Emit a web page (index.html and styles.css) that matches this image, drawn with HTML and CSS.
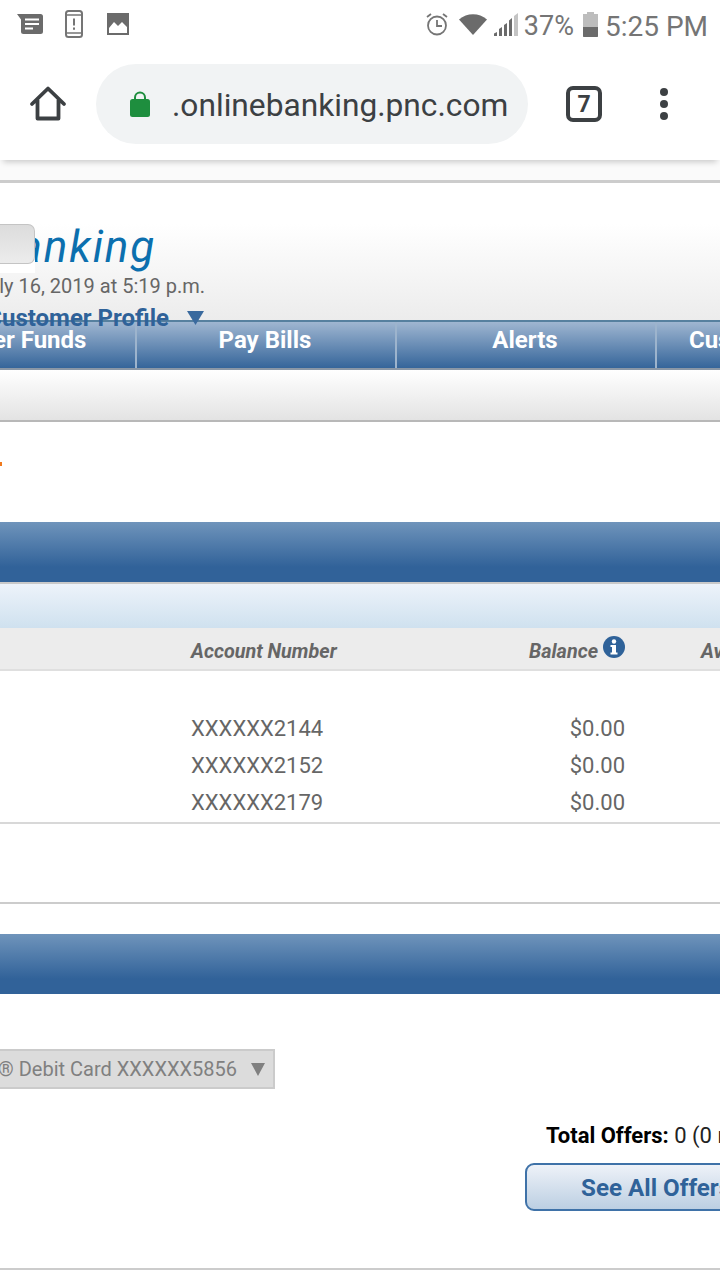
FILE: index.html
```html
<!DOCTYPE html>
<html lang="en">
<head>
<meta charset="utf-8">
<title>PNC Online Banking</title>
<link rel="stylesheet" href="styles.css">
</head>
<body>
<div class="screen">
  <div class="status">
    <div class="status-left">
      <svg class="ic-msg" width="26" height="20" viewBox="0 0 26 20"><path d="M0 0h23.500A2.500 2.500 0 0 1 26 2.500v15a2.500 2.500 0 0 1-2.500 2.500H6.500A2.500 2.500 0 0 1 4 17.500V5.500z" fill="#6b6b6b"/><path d="M8 5.500h14M8 10h14M8 14.500h8" stroke="#fff" stroke-width="2"/></svg>
      <svg class="ic-phone" width="18" height="28" viewBox="0 0 18 28"><rect x="1" y="1" width="16" height="26" rx="2.500" fill="none" stroke="#757575" stroke-width="2"/><path d="M1 5h16M1 23h16" stroke="#757575" stroke-width="1.500"/><path d="M9 8.500v7M9 17.500v2.200" stroke="#757575" stroke-width="2"/></svg>
      <svg class="ic-pic" width="22" height="22" viewBox="0 0 22 22"><rect width="22" height="22" fill="#6b6b6b"/><path d="M2 20v-5l5-6 4 4 4-4 5 5v6z" fill="#fff"/></svg>
    </div>
    <div class="status-right">
      <svg class="ic-alarm" width="24" height="24" viewBox="0 0 24 24"><circle cx="12" cy="13.500" r="9" fill="none" stroke="#757575" stroke-width="1.800"/><path d="M12 8v6h5M2 5l4-3M22 5l-4-3" fill="none" stroke="#757575" stroke-width="1.800"/></svg>
      <svg class="ic-wifi" width="28" height="21" viewBox="0 0 28 21"><path d="M0 5.500C8-1.500 20-1.500 28 5.500L14 21z" fill="#6b6b6b"/></svg>
      <svg class="ic-signal" width="24" height="23" viewBox="0 0 24 23"><path d="M0 23h3v-4l-3 1.500zM5 23h3V14l-3 2zM10 23h3V10l-3 2zM15 23h3V5l-3 2.500z" fill="#6b6b6b"/><path d="M20 23h4V0l-4 3z" fill="#c4c4c4"/></svg>
      <span class="pct">37%</span>
      <svg class="ic-batt" width="15" height="25" viewBox="0 0 15 25"><path d="M4 0h7v2h4v23H0V2h4z" fill="#bdbdbd"/><path d="M0 15h15v9a1 1 0 0 1-1 1H1a1 1 0 0 1-1-1z" fill="#6b6b6b"/></svg>
      <span class="clock">5:25 PM</span>
    </div>
  </div>

  <div class="toolbar">
    <svg class="ic-home" width="38" height="38" viewBox="0 0 38 38"><path d="M3 19 19 3.500 35 19M8.500 15v18.500h21V15" fill="none" stroke="#3c4043" stroke-width="3.800" stroke-linejoin="round" stroke-linecap="round"/></svg>
    <div class="omnibox">
      <svg class="ic-lock" width="20" height="26" viewBox="0 0 20 26"><path d="M5 10V6.500a5 5 0 0 1 10 0V10" fill="none" stroke="#1e8e3e" stroke-width="2"/><rect y="8" width="20" height="18" rx="2.500" fill="#1e8e3e"/></svg>
      <span class="url">.onlinebanking.pnc.com</span>
    </div>
    <div class="tabs">7</div>
    <div class="menu"><i></i><i></i><i></i></div>
  </div>

  <div class="page">
    <div class="band"></div>
    <header class="masthead">
      <div class="logo-line">
        <span class="logo">Online Banking</span>
        <span class="logo-cover"><span class="logo-btn"></span></span>
      </div>
      <div class="date-line"><span>Last sign on July 16, 2019 at 5:19 p.m.</span></div>
      <div class="profile-line"><span>Customer Profile</span><svg width="17" height="14" viewBox="0 0 17 14"><path d="M0 0h17L8.500 14z" fill="#3a6a9e"/></svg></div>
    </header>
    <nav class="nav">
      <div class="nav-item">Transfer Funds</div>
      <div class="nav-item">Pay Bills</div>
      <div class="nav-item">Alerts</div>
      <div class="nav-item">Customer Service</div>
    </nav>
    <div class="subnav"></div>

    <div class="title-area"><i class="orange"></i></div>

    <div class="panel-head"></div>
    <div class="panel-sub"></div>
    <div class="cols">
      <span></span>
      <span class="th">Account Number</span>
      <span class="th th-bal">Balance <svg class="ic-info" width="22" height="22" viewBox="0 0 22 22"><circle cx="11" cy="11" r="11" fill="#2f6299"/><circle cx="11" cy="5.500" r="2.200" fill="#fff"/><path d="M7.500 9h5.500v7.500h1.500V18.500h-7v-2h1.500V11H7.500z" fill="#fff"/></svg></span>
      <span class="th">Available Balance</span>
    </div>
    <div class="rows">
      <div class="row"><span></span><span>XXXXXX2144</span><span class="bal">$0.00</span></div>
      <div class="row"><span></span><span>XXXXXX2152</span><span class="bal">$0.00</span></div>
      <div class="row"><span></span><span>XXXXXX2179</span><span class="bal">$0.00</span></div>
    </div>
    <div class="gap-box"></div>

    <div class="panel-head panel-two"></div>
    <div class="offers">
      <div class="select"><span class="select-text">PNC Bank Visa® Debit Card XXXXXX5856</span><svg width="14" height="14" viewBox="0 0 14 14"><path d="M0 1h14L7 14z" fill="#808080"/></svg></div>
      <div class="total"><b>Total Offers:</b> 0 (0 new)</div>
      <div class="see-all">See All Offers</div>
    </div>
  </div>
</div>
</body>
</html>
```
FILE: styles.css
```css
* { box-sizing: border-box; }
html, body { margin: 0; padding: 0; background: #fff; }
body { font-family: Roboto, "Liberation Sans", sans-serif; }
.screen { width: 720px; height: 1280px; overflow: hidden; }

.status { height: 48px; display: flex; justify-content: space-between; align-items: center; color: #757575; }
.status-left { display: flex; align-items: center; margin-left: 17px; }
.ic-phone { margin-left: 22px; }
.ic-pic { margin-left: 24px; }
.status-right { display: flex; align-items: center; margin-right: 12px; }
.ic-wifi { margin-left: 10px; }
.ic-signal { margin-left: 7px; }
.pct { font-size: 27px; margin-left: 6px; padding-top: 4px; }
.ic-batt { margin-left: 9px; }
.clock { font-size: 28px; margin-left: 7px; padding-top: 4px; }

.toolbar { height: 112px; display: flex; align-items: center; position: relative; z-index: 2; background: #fff; box-shadow: 0 5px 6px -3px rgba(0,0,0,.2); }
.ic-home { margin-left: 29px; flex: none; }
.omnibox { margin-left: 29px; width: 432px; height: 80px; border-radius: 40px; background: #f1f3f4; display: flex; align-items: center; padding-left: 34px; flex: none; }
.url { margin-left: 22px; padding-top: 2px; font-size: 31.700px; color: #3c4043; white-space: nowrap; }
.tabs { margin-left: 38px; width: 36px; height: 36px; border: 4px solid #3c4043; border-radius: 7px; display: flex; align-items: center; justify-content: center; font-size: 23px; font-weight: 700; color: #3c4043; flex: none; }
.menu { margin-left: 58px; display: flex; flex-direction: column; gap: 4px; flex: none; }
.menu i { display: block; width: 8px; height: 8px; border-radius: 50%; background: #3c4043; }

.band { height: 23px; background: #fafafa; border-bottom: 3px solid #ccc; }
.masthead { height: 137px; background: linear-gradient(#fff 30%, #ececec); padding-top: 41px; }
.logo-line { position: relative; width: 156px; height: 49px; display: flex; justify-content: flex-end; overflow: hidden; }
.logo { font-family: Roboto, sans-serif; font-style: italic; font-weight: 400; font-size: 44px; letter-spacing: 1.800px; line-height: 46px; color: #0b6fae; white-space: nowrap; flex: none; }
.logo-cover { position: absolute; left: 0; top: 0; width: 35px; height: 49px; background: #fff; }
.logo-btn { display: block; width: 35px; height: 40px; background: linear-gradient(#dcdcdc, #ececec); border: 1px solid #c4c4c4; border-left: 0; border-radius: 0 7px 7px 0; }
.date-line { width: 205px; display: flex; justify-content: flex-end; overflow: hidden; font-size: 20px; line-height: 26px; color: #666; white-space: nowrap; }
.date-line span, .profile-line span { flex: none; }
.profile-line { width: 204px; display: flex; justify-content: flex-end; align-items: center; overflow: hidden; gap: 18px; margin-top: 6px; font-size: 24px; line-height: 26px; font-weight: 700; color: #2f6299; white-space: nowrap; }
.profile-line svg { flex: none; }

.nav { height: 50px; display: flex; margin-left: -123px; background: linear-gradient(#9fb6d1, #35659a); border-top: 2px solid #56809f; border-bottom: 2px solid #8a97a6; white-space: nowrap; }
.nav-item { flex: none; width: 260px; padding-right: 2px; text-align: center; color: #fff; font-size: 24px; line-height: 36px; font-weight: 700; border-right: 2px solid #9db4cd; }

.subnav { height: 52px; background: linear-gradient(#fff, #e3e3e3); border-bottom: 2px solid #b8b8b8; }
.title-area { height: 100px; padding-top: 40px; }
.orange { display: block; width: 2px; height: 4px; background: #f07a1e; }

.panel-head { height: 60px; background: linear-gradient(#6f94bb, #316299 75%); }
.panel-sub { height: 46px; background: linear-gradient(#edf3fa, #cfe1ef); border-top: 2px solid #c9c9c9; }
.cols, .row { display: grid; grid-template-columns: 191px 270px 164px 200px; white-space: nowrap; }
.cols { height: 43px; padding-top: 6px; background: #ececec; border-bottom: 2px solid #dfdfdf; align-items: center; }
.th { font-size: 19.800px; font-weight: 700; font-style: italic; color: #666; }
.th-bal { display: flex; justify-content: flex-end; align-items: center; gap: 5px; }
.cols > span:last-child { margin-left: 76px; }
.ic-info { position: relative; top: -5px; flex: none; }
.rows { padding-top: 39px; height: 153px; border-bottom: 2px solid #d8d8d8; }
.row { height: 37px; font-size: 22px; line-height: 37px; color: #666; }
.bal { text-align: right; }
.gap-box { height: 80px; border-bottom: 2px solid #ccc; margin-bottom: 30px; }

.offers { padding-top: 55px; height: 276px; border-bottom: 2px solid #ccc; }
.select { width: 275px; height: 40px; display: flex; justify-content: flex-end; align-items: center; gap: 14px; padding-right: 8px; background: #dcdcdc; border: 2px solid #cbcbcb; border-left: 0; overflow: hidden; color: #808080; font-size: 20px; white-space: nowrap; }
.select-text, .select svg { flex: none; }
.total { margin-top: 35px; padding-left: 546px; height: 24px; font-size: 22px; line-height: 24px; color: #222; white-space: nowrap; }
.total b { color: #000; }
.see-all { margin-top: 15px; margin-left: 525px; width: 260px; height: 48px; padding-left: 54px; border: 2px solid #3f72a8; border-radius: 9px; background: linear-gradient(#eef2f8, #bccfe2); color: #2f6299; font-size: 24.200px; line-height: 46px; font-weight: 700; white-space: nowrap; }
```
